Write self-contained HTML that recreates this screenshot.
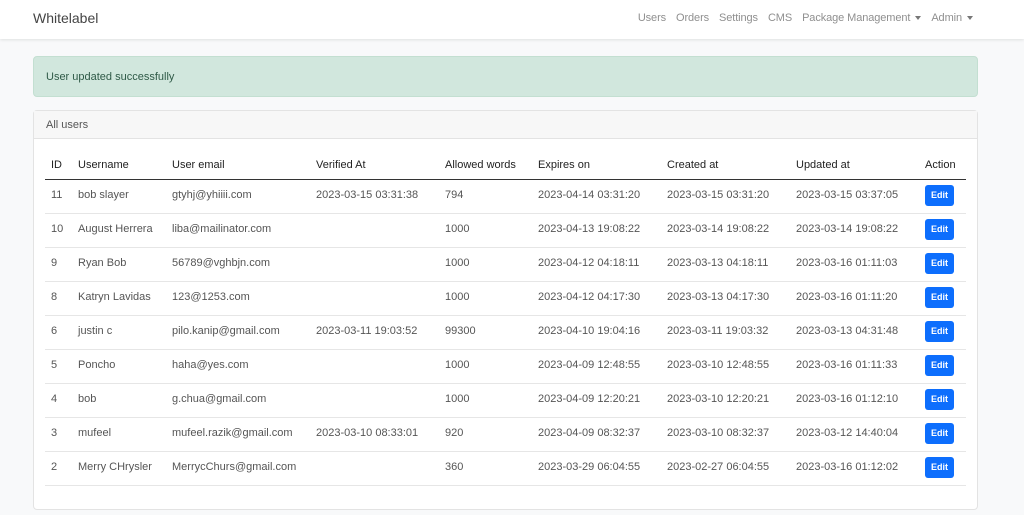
<!DOCTYPE html>
<html><head><style>
*{box-sizing:border-box;margin:0;padding:0}
body{width:1024px;height:515px;overflow:hidden;background:#f8f9fa;font-family:"Liberation Sans",sans-serif;color:#212529;position:relative;font-size:11px}
.nav{position:absolute;left:0;top:0;width:1024px;height:39px;background:#fff;box-shadow:0 1px 3px rgba(0,0,0,.1)}
.brand{position:absolute;left:33px;top:10px;font-size:14px;color:#444}
.links{position:absolute;right:51px;top:12px;font-size:11px;color:#8f8f8f;white-space:nowrap;letter-spacing:-0.1px}
.links span{margin-left:7px}
.car{display:inline-block;border-top:4px solid #777;border-left:3px solid transparent;border-right:3px solid transparent;vertical-align:middle;margin-left:5px}
.alert{position:absolute;left:33px;top:56px;width:945px;height:41px;background:#d1e7dd;border:1px solid #c3dfd1;border-radius:4px;color:#2f5a47;padding:14px 12px;font-size:11px}
.card{position:absolute;left:33px;top:110px;width:945px;height:400px;background:#fff;border:1px solid #e3e3e3;border-radius:4px}
.ch{height:28px;background:#f7f7f7;border-bottom:1px solid #e3e3e3;padding:8px 12px;color:#555}
table{position:absolute;left:11px;top:40px;width:921px;border-collapse:collapse;table-layout:fixed}
th{font-weight:normal;text-align:left;height:28px;border-bottom:1.5px solid #333;padding:0 0 0 6px;color:#222}
td{height:34px;border-bottom:1px solid #e6e6e6;padding:0 0 2px 6px;color:#555;white-space:nowrap}
.b{display:inline-block;background:#0d6efd;color:#fff;font-size:9px;font-weight:bold;width:29px;height:21px;line-height:21px;text-align:center;border-radius:3px}
</style></head><body>
<div class="nav"><div class="brand">Whitelabel</div>
<div class="links"><span>Users</span> <span>Orders</span> <span>Settings</span> <span>CMS</span> <span>Package Management<i class="car"></i></span> <span>Admin<i class="car"></i></span></div></div>
<div class="alert">User updated successfully</div>
<div class="card"><div class="ch">All users</div>
<table>
<colgroup><col style="width:27px"><col style="width:94px"><col style="width:144px"><col style="width:129px"><col style="width:93px"><col style="width:129px"><col style="width:129px"><col style="width:129px"><col></colgroup>
<tr><th>ID</th><th>Username</th><th>User email</th><th>Verified At</th><th>Allowed words</th><th>Expires on</th><th>Created at</th><th>Updated at</th><th>Action</th></tr>
<tr><td>11</td><td>bob slayer</td><td>gtyhj@yhiiii.com</td><td>2023-03-15 03:31:38</td><td>794</td><td>2023-04-14 03:31:20</td><td>2023-03-15 03:31:20</td><td>2023-03-15 03:37:05</td><td><span class="b">Edit</span></td></tr>
<tr><td>10</td><td>August Herrera</td><td>liba@mailinator.com</td><td></td><td>1000</td><td>2023-04-13 19:08:22</td><td>2023-03-14 19:08:22</td><td>2023-03-14 19:08:22</td><td><span class="b">Edit</span></td></tr>
<tr><td>9</td><td>Ryan Bob</td><td>56789@vghbjn.com</td><td></td><td>1000</td><td>2023-04-12 04:18:11</td><td>2023-03-13 04:18:11</td><td>2023-03-16 01:11:03</td><td><span class="b">Edit</span></td></tr>
<tr><td>8</td><td>Katryn Lavidas</td><td>123@1253.com</td><td></td><td>1000</td><td>2023-04-12 04:17:30</td><td>2023-03-13 04:17:30</td><td>2023-03-16 01:11:20</td><td><span class="b">Edit</span></td></tr>
<tr><td>6</td><td>justin c</td><td>pilo.kanip@gmail.com</td><td>2023-03-11 19:03:52</td><td>99300</td><td>2023-04-10 19:04:16</td><td>2023-03-11 19:03:32</td><td>2023-03-13 04:31:48</td><td><span class="b">Edit</span></td></tr>
<tr><td>5</td><td>Poncho</td><td>haha@yes.com</td><td></td><td>1000</td><td>2023-04-09 12:48:55</td><td>2023-03-10 12:48:55</td><td>2023-03-16 01:11:33</td><td><span class="b">Edit</span></td></tr>
<tr><td>4</td><td>bob</td><td>g.chua@gmail.com</td><td></td><td>1000</td><td>2023-04-09 12:20:21</td><td>2023-03-10 12:20:21</td><td>2023-03-16 01:12:10</td><td><span class="b">Edit</span></td></tr>
<tr><td>3</td><td>mufeel</td><td>mufeel.razik@gmail.com</td><td>2023-03-10 08:33:01</td><td>920</td><td>2023-04-09 08:32:37</td><td>2023-03-10 08:32:37</td><td>2023-03-12 14:40:04</td><td><span class="b">Edit</span></td></tr>
<tr><td>2</td><td>Merry CHrysler</td><td>MerrycChurs@gmail.com</td><td></td><td>360</td><td>2023-03-29 06:04:55</td><td>2023-02-27 06:04:55</td><td>2023-03-16 01:12:02</td><td><span class="b">Edit</span></td></tr>
</table></div>
</body></html>
